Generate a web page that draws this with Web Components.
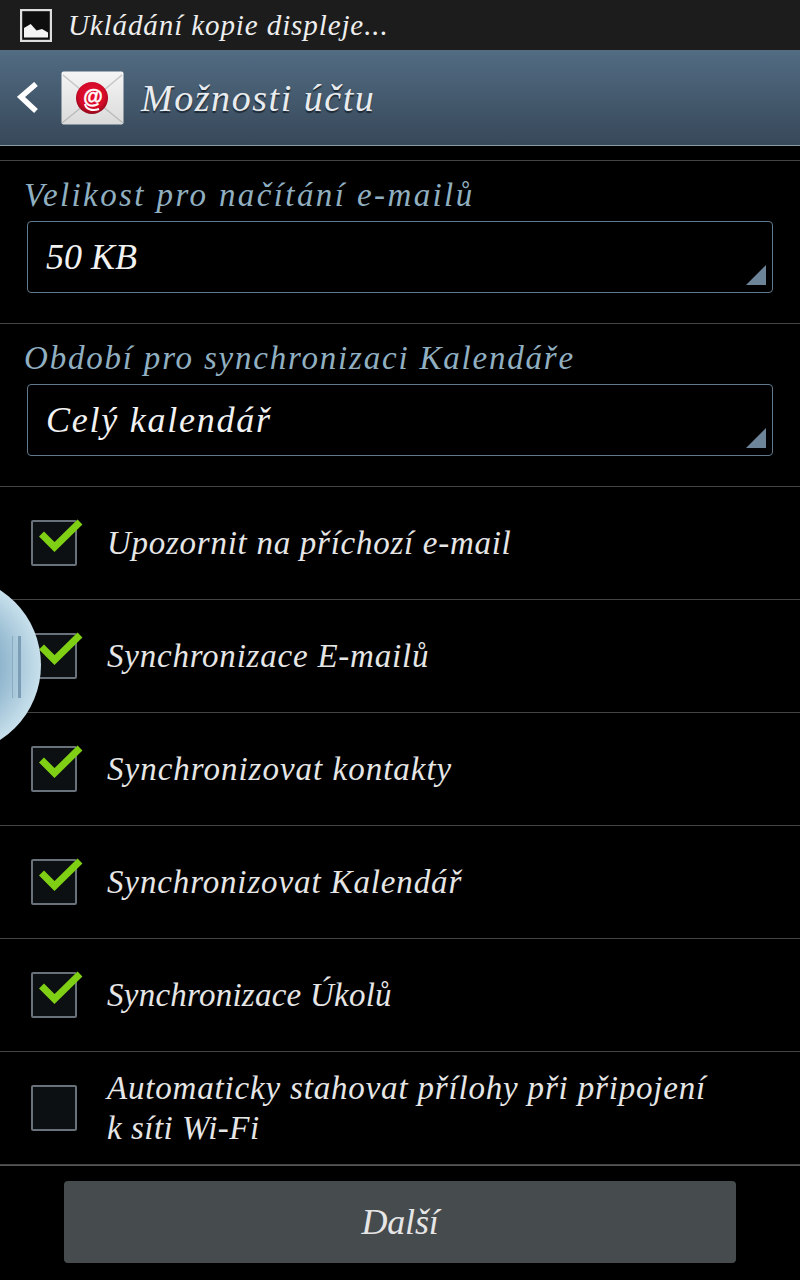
<!DOCTYPE html>
<html lang="cs">
<head>
<meta charset="utf-8">
<title>Možnosti účtu</title>
<style>
    html, body { margin: 0; background: #000; }
    body {
        width: 800px;
        height: 1280px;
        overflow: hidden;
        position: relative;
        font-family: "Liberation Serif", serif;
        font-style: italic;
        display: flex;
        flex-direction: column;
    }
    .spacer { height: 14px; flex: none; }
    .list { flex: none; border-top: 1px solid #444; }
    .tight { letter-spacing: 0.5px; }
</style>
</head>
<body>
<status-bar>Ukládání kopie displeje...</status-bar>
<action-bar>Možnosti účtu</action-bar>
<div class="spacer"></div>
<div class="list">
    <spinner-field label="Velikost pro načítání e-mailů" style="--label-spacing: 2.4px; --value-spacing: 0">50 KB</spinner-field>
    <spinner-field label="Období pro synchronizaci Kalendáře" style="--label-spacing: 1.8px; --value-spacing: 1.75px">Celý kalendář</spinner-field>
    <check-row checked style="letter-spacing: 0.73px">Upozornit na příchozí e-mail</check-row>
    <check-row checked style="letter-spacing: 0.78px">Synchronizace E-mailů</check-row>
    <check-row checked style="letter-spacing: 1px">Synchronizovat kontakty</check-row>
    <check-row checked style="letter-spacing: 0.87px">Synchronizovat Kalendář</check-row>
    <check-row checked style="letter-spacing: 0.25px">Synchronizace Úkolů</check-row>
    <check-row style="letter-spacing: 0.82px">Automaticky stahovat přílohy při připojení<br><span class="tight">k síti Wi-Fi</span></check-row>
</div>
<next-button>Další</next-button>
<side-handle></side-handle>

<script>
class StatusBar extends HTMLElement {
    constructor() {
        super();
        this.attachShadow({mode: 'open'});
        this.shadowRoot.innerHTML = `
            <style>
                :host {
                    display: flex;
                    align-items: center;
                    gap: 16px;
                    height: 50px;
                    flex: none;
                    box-sizing: border-box;
                    padding-left: 20px;
                    background: #1c1c1c;
                    color: #eee;
                    font-size: 29px;
                }
                svg { flex: none; }
                span { letter-spacing: 0.9px; }
            </style>
            <svg width="32" height="33" viewBox="0 0 32 33">
                <rect x="1" y="1" width="30" height="31" fill="#0e0e0e" stroke="#dedede" stroke-width="2.4"/>
                <path d="M4 28.5 V19 L10.7 15 L16.5 21.5 L22 20 L28 23.5 V28.5 Z" fill="#f4f4f4"/>
            </svg>
            <span><slot></slot></span>
        `;
    }
}

class ActionBar extends HTMLElement {
    constructor() {
        super();
        this.attachShadow({mode: 'open'});
        this.shadowRoot.innerHTML = `
            <style>
                :host {
                    display: flex;
                    align-items: center;
                    height: 96px;
                    flex: none;
                    box-sizing: border-box;
                    padding-left: 17px;
                    background: linear-gradient(#526c83, #374859);
                    border-bottom: 1px solid #8a99a6;
                    color: #e9ecef;
                    font-size: 38px;
                    text-shadow: 0 2px 1px #1d2833;
                }
                .back { flex: none; margin-right: 23px; }
                .mail { flex: none; margin-right: 17px; }
                span { letter-spacing: 1.55px; }
            </style>
            <svg class="back" width="21" height="32" viewBox="0 0 21 32">
                <path d="M19 2 L4 15 L19 29" fill="none" stroke="#fff" stroke-width="5.5"/>
            </svg>
            <svg class="mail" width="63" height="54" viewBox="0 0 63 54">
                <defs>
                    <linearGradient id="env" x1="0" y1="0" x2="0" y2="1">
                        <stop offset="0" stop-color="#f5f5f5"/>
                        <stop offset="1" stop-color="#dadada"/>
                    </linearGradient>
                    <radialGradient id="seal" cx="0.5" cy="0.42" r="0.58">
                        <stop offset="0" stop-color="#ea0e30"/>
                        <stop offset="0.7" stop-color="#d40a28"/>
                        <stop offset="1" stop-color="#90091c"/>
                    </radialGradient>
                </defs>
                <rect x="0.5" y="0.5" width="62" height="53" rx="2" fill="url(#env)"/>
                <path d="M1 52 L22 35 M62 52 L41 35" stroke="#bcbcbc" stroke-width="1.5"/>
                <path d="M2 4 L20 19 M61 4 L43 19" stroke="#c6c6c6" stroke-width="1.5"/>
                <circle cx="31" cy="27" r="16" fill="url(#seal)"/>
                <text x="32" y="32" text-anchor="middle" fill="#fff" stroke="#fff" stroke-width="0.5" font-family="Liberation Sans, sans-serif" font-style="normal" font-weight="700" font-size="20" style="text-shadow:none">@</text>
                <path d="M24 33 C25 39 32 40 38 38" fill="none" stroke="#fff" stroke-width="2"/>
            </svg>
            <span><slot></slot></span>
        `;
    }
}

class SpinnerField extends HTMLElement {
    constructor() {
        super();
        this.attachShadow({mode: 'open'});
        this.label = this.getAttribute('label') || '';
        this.shadowRoot.innerHTML = `
            <style>
                :host {
                    display: flex;
                    flex-direction: column;
                    height: 163px;
                    box-sizing: border-box;
                    border-bottom: 1px solid #444;
                    padding: 0 27px;
                }
                .label {
                    height: 60px;
                    margin-left: -3px;
                    line-height: 69px;
                    font-size: 33px;
                    letter-spacing: var(--label-spacing, 1.4px);
                    color: #90b0c2;
                    white-space: nowrap;
                }
                .box {
                    position: relative;
                    height: 72px;
                    box-sizing: border-box;
                    border: 1px solid #5f7a8f;
                    border-radius: 4px;
                    display: flex;
                    align-items: center;
                    padding-left: 18px;
                    color: #f2f2f2;
                    font-size: 36px;
                    letter-spacing: var(--value-spacing, 1.2px);
                }
                .arrow {
                    position: absolute;
                    right: 6px;
                    bottom: 7px;
                    width: 20px;
                    height: 20px;
                    background: #6d8499;
                    clip-path: polygon(100% 0, 100% 100%, 0 100%);
                }
            </style>
            <div class="label">${this.label}</div>
            <div class="box"><slot></slot><div class="arrow"></div></div>
        `;
    }
}

class CheckRow extends HTMLElement {
    constructor() {
        super();
        this.attachShadow({mode: 'open'});
        let mark = '';
        if (this.hasAttribute('checked')) {
            mark = `<svg viewBox="0 0 54 36" width="54" height="36">
                <path d="M10.5 15 L23.5 28 L49 3" fill="none" stroke="#7fd015" stroke-width="7"/>
            </svg>`;
        }
        this.shadowRoot.innerHTML = `
            <style>
                :host {
                    display: flex;
                    align-items: center;
                    height: 113px;
                    box-sizing: border-box;
                    border-bottom: 1px solid #444;
                    padding-left: 31px;
                    color: #e6e6e6;
                    font-size: 33px;
                    line-height: 40px;
                    letter-spacing: 1.3px;
                }
                .box {
                    position: relative;
                    flex: none;
                    width: 46px;
                    height: 46px;
                    box-sizing: border-box;
                    margin-right: 30px;
                    border: 2px solid #69717a;
                    border-radius: 2px;
                    background: #0d1012;
                }
                svg { position: absolute; left: -2px; top: -3px; overflow: visible; }
            </style>
            <div class="box">${mark}</div>
            <div><slot></slot></div>
        `;
    }
}

class NextButton extends HTMLElement {
    constructor() {
        super();
        this.attachShadow({mode: 'open'});
        this.shadowRoot.innerHTML = `
            <style>
                :host {
                    display: flex;
                    justify-content: center;
                    padding-top: 15px;
                    border-top: 1px solid #555;
                    flex: none;
                }
                button {
                    width: 672px;
                    height: 82px;
                    border: none;
                    border-radius: 4px;
                    background: #464b4e;
                    color: #e6e6e6;
                    font: inherit;
                    font-size: 36px;
                    letter-spacing: -0.2px;
                }
            </style>
            <button><slot></slot></button>
        `;
    }
}

class SideHandle extends HTMLElement {
    constructor() {
        super();
        this.attachShadow({mode: 'open'});
        this.shadowRoot.innerHTML = `
            <style>
                :host {
                    position: absolute;
                    left: -137px;
                    top: 576px;
                    width: 178px;
                    height: 178px;
                    border-radius: 50%;
                    background: radial-gradient(circle closest-side, #8fb5cd 54%, #c8e0ec 100%);
                }
                i {
                    position: absolute;
                    top: 60px;
                    width: 3px;
                    height: 62px;
                }
                .a { left: 150px; background: #a9c8da; box-shadow: -1px 0 0 #8aacc3; }
                .b { left: 155px; background: #7b9db6; }
            </style>
            <i class="a"></i><i class="b"></i>
        `;
    }
}

customElements.define('status-bar', StatusBar);
customElements.define('action-bar', ActionBar);
customElements.define('spinner-field', SpinnerField);
customElements.define('check-row', CheckRow);
customElements.define('next-button', NextButton);
customElements.define('side-handle', SideHandle);
</script>
</body>
</html>
